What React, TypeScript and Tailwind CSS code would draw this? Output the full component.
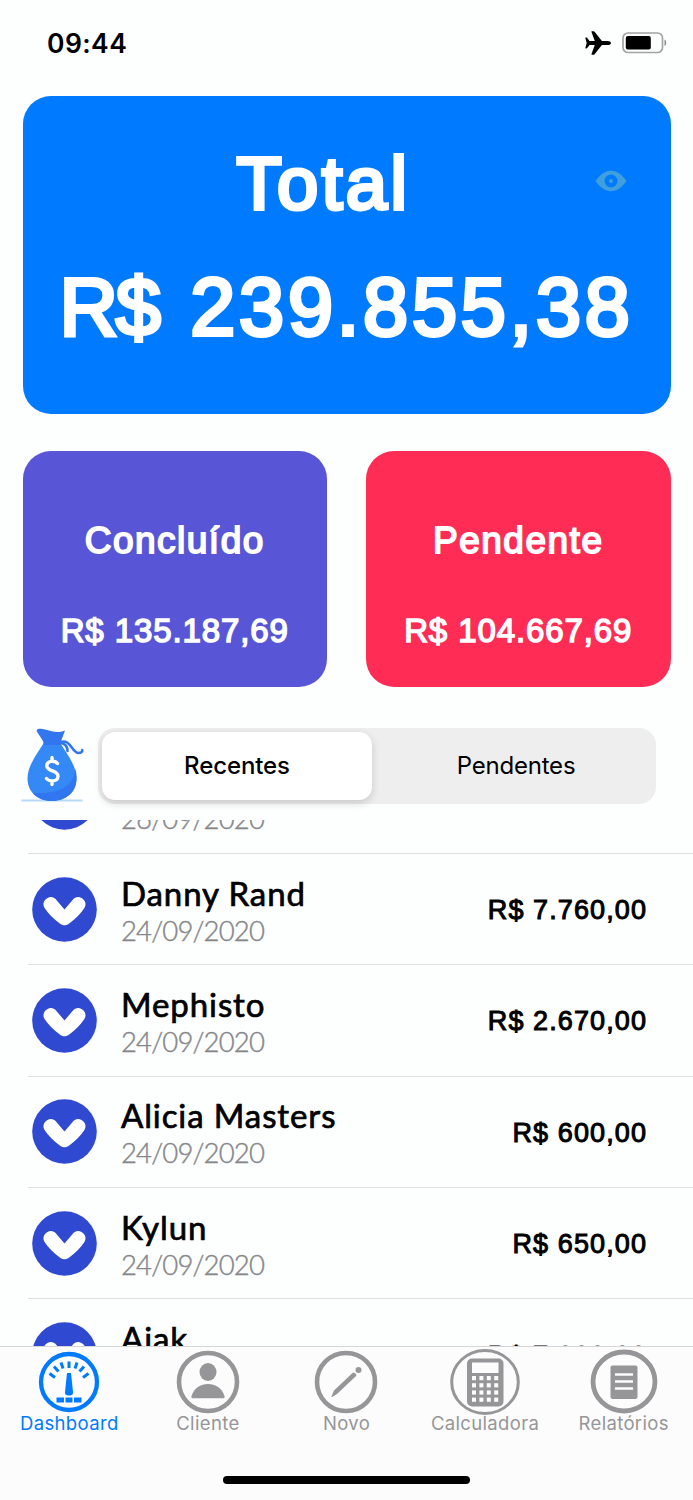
import { useState } from 'react'
import type { ReactNode } from 'react'

type Conta = { id: number; nome?: string; data: string; valor?: string }

const contas: Conta[] = [
  { id: 1, data: '26/09/2020' },
  { id: 2, nome: 'Danny Rand', data: '24/09/2020', valor: 'R$ 7.760,00' },
  { id: 3, nome: 'Mephisto', data: '24/09/2020', valor: 'R$ 2.670,00' },
  { id: 4, nome: 'Alicia Masters', data: '24/09/2020', valor: 'R$ 600,00' },
  { id: 5, nome: 'Kylun', data: '24/09/2020', valor: 'R$ 650,00' },
  { id: 6, nome: 'Ajak', data: '24/09/2020', valor: 'R$ 7.000,00' },
]

function StatusBar() {
  return (
    <div className="flex h-[96px] shrink-0 items-start justify-between pt-[28px] pr-[26px] pl-[47px]">
      <span className="text-[26.500px] leading-[31px] font-semibold tracking-[0.4px]">09:44</span>
      <div className="flex items-center gap-[11px] pt-[3px]">
        <svg width="26" height="24" viewBox="0 0 26 24">
          <path
            d="M26 12c0-1.300-1.500-2.100-3.300-2.100h-5.800L9.600.8C9.300.4 9 .2 8.600.2H6.900c-.4 0-.6.300-.4.800l3.300 8.900H4.600L2.200 6.900C2 6.600 1.800 6.500 1.400 6.500H.8c-.4 0-.5.300-.4.700L1.700 12 .4 16.800c-.1.400 0 .7.400.7h.6c.4 0 .6-.1.800-.4l2.400-3h5.200L6.500 23c-.2.500 0 .8.400.8h1.700c.4 0 .7-.2 1-.6l7.300-9.100h5.800c1.800 0 3.300-.8 3.300-2.100z"
          />
        </svg>
        <svg width="45" height="22" viewBox="0 0 45 22" fill="none">
          <rect x="1" y="1" width="39.500" height="19.500" rx="5" stroke="#a3a3a3" strokeWidth="1.700" />
          <rect x="3.800" y="4" width="25" height="13.500" rx="2" fill="#000" />
          <path d="M42.500 7.500c2.300 1.200 2.300 5.300 0 6.500z" fill="#8e8e8e" />
        </svg>
      </div>
    </div>
  )
}

function Olho() {
  return (
    <svg width="32" height="22" viewBox="0 0 32 22">
      <path d="M.5 11C5.500 4 10.500.8 16 .8S26.500 4 31.500 11C26.500 18 21.500 21.200 16 21.200S5.500 18 .5 11z" fill="#409fdc" />
      <circle cx="16" cy="11" r="6.500" fill="#007aff" />
      <circle cx="16" cy="11" r="2" fill="#409fdc" />
    </svg>
  )
}

function SacoDinheiro() {
  return (
    <svg width="64" height="76" viewBox="0 0 64 76" fill="none">
      <path d="M.5 72.500h61" stroke="#b9d9fb" strokeWidth="2" />
      <path d="M23 14.500C17 25 6.500 37 6.500 50.500c0 14 11 22.500 24.500 22.500s24.500-8.500 24.500-22.500C55.500 37 45 25 39 14.500z" fill="#3489f6" />
      <path d="M54.500 41c-1.500 14-12 24-35 24-2.500 0-4.500-.5-7.500.5C16.500 70.500 23.500 73 31 73c13.500 0 24.500-8.500 24.500-22.500 0-3.500-.2-7-1-9.500z" fill="#3176ee" />
      <path d="M22.500 17c1-3-2-6-6-12.500-2-3 0-4 3.500-3.700 7.500.7 14 5.700 24 1.700l-5 13.500 1.500 1z" fill="#3176ee" />
      <path d="M39 14.500c10-5 12 10.500 18.500 10.500 2.500 0 4-1 3.700-3M40 15c5 1 6.500 4 6.500 8" stroke="#3176ee" strokeWidth="2.600" strokeLinecap="round" />
      <path d="M36.500 35.500c-2.500-3.500-10.500-3-10.700 2.200-.2 6.500 11.700 4 11.200 10.800-.4 5.500-8.500 5.500-11.500 2M31 29.500V33M31 53v3.500" stroke="#fff" strokeWidth="3.400" strokeLinecap="round" />
    </svg>
  )
}

function Seta() {
  return (
    <svg width="65" height="65" viewBox="0 0 65 65" className="shrink-0">
      <circle cx="32.500" cy="32.500" r="32.300" fill="#2f49d1" />
      <path
        d="M15.500 21c3-1.700 6.500-1 8.700 1.700l8.300 9.800 8.300-9.800c2.200-2.700 5.700-3.400 8.700-1.700 4 2.300 5.100 6.300 2.900 10-3.400 5.700-8.900 10.500-14.900 15.200-3.500 2.800-6.500 2.800-10 0-6-4.700-11.500-9.500-14.900-15.200-2.200-3.700-1.100-7.700 2.900-10z"
        fill="#fff"
      />
    </svg>
  )
}

function Linha({ conta }: { conta: Conta }) {
  return (
    <div className="ml-[28px] flex h-[111.4px] shrink-0 items-center border-b-[1.4px] border-[#dfdfe0] pr-[46px] pl-[4px]">
      <Seta />
      <div className="ml-[24px] flex-1 pt-[4px] font-[Lato,sans-serif]">
        <p className="h-[38px] text-[33px] leading-[38px] tracking-[0.900px] text-black [-webkit-text-stroke:0.7px_#000]">{conta.nome}</p>
        <p className="text-[27.500px] leading-[37px] font-light tracking-[-0.85px] text-[#87878a] [-webkit-text-stroke:0.4px_#87878a]">{conta.data}</p>
      </div>
      <p className="pt-[2px] font-['Liberation_Sans',sans-serif] text-[27px] leading-[30px] tracking-[1.1px] text-black [-webkit-text-stroke:1px_#000]">
        {conta.valor}
      </p>
    </div>
  )
}

function Cartao({ titulo, valor, cor }: { titulo: string; valor: string; cor: string }) {
  return (
    <div className={`${cor} flex h-[236px] w-[304.500px] flex-col items-center rounded-[28px] pt-[68px] font-['Liberation_Sans',sans-serif] text-white`}>
      <p className="text-[37px] leading-[44px] tracking-[1.5px] [-webkit-text-stroke:1.8px_#fff]">{titulo}</p>
      <p className="mt-[48px] text-[33px] leading-[40px] tracking-[0.9px] [-webkit-text-stroke:1.5px_#fff]">{valor}</p>
    </div>
  )
}

function IconeDashboard() {
  return (
    <svg width="62" height="62" viewBox="0 0 62 62" fill="none" stroke="currentColor">
      <circle cx="31" cy="31" r="28" strokeWidth="4.300" />
      <path d="M11.500 22.500l5.500 4M16 15.500l4.500 5M23 11.500l2 6M31 10.500v6.500M39 11.500l-2 6M46 15.500l-4.500 5M50.500 22.500l-5.500 4" strokeWidth="3" />
      <path d="M29 22h4l2 19c.1 2.500-.8 3.500-4 3.500s-4.100-1-4-3.500z" fill="currentColor" stroke="none" />
      <path d="M18.500 49h7.500M27.500 49h7M36 49h7.500" strokeWidth="5" />
    </svg>
  )
}

function IconeCliente() {
  return (
    <svg width="64" height="64" viewBox="0 0 64 64" fill="currentColor">
      <circle cx="32" cy="32" r="29" fill="none" stroke="currentColor" strokeWidth="4.600" />
      <ellipse cx="32" cy="22" rx="8.500" ry="9" />
      <path d="M15.500 46c2.500-8 9-12 16.500-12s14 4 16.500 12c.4 1.500-.2 2.300-1.500 2.300H17c-1.300 0-1.900-.8-1.500-2.300z" />
    </svg>
  )
}

function IconeNovo() {
  return (
    <svg width="64" height="64" viewBox="0 0 64 64" fill="currentColor">
      <circle cx="32" cy="32" r="29" fill="none" stroke="currentColor" strokeWidth="4.600" />
      <path d="M17.500 46.500l2.500-6 18.500-17.500c1-.8 1.700-.8 2.500 0l.8.900c.8.900.7 1.600 0 2.400L23 44l-5 3c-.5.200-.7 0-.5-.5z" />
      <circle cx="44.500" cy="20" r="3" />
    </svg>
  )
}

function IconeCalculadora() {
  const pos = [0, 1, 2, 3]
  return (
    <svg width="70" height="66" viewBox="0 0 70 66" fill="currentColor">
      <ellipse cx="35" cy="33" rx="33.300" ry="31.500" fill="none" stroke="currentColor" strokeWidth="3" />
      <rect x="17" y="9.500" width="36.500" height="48" rx="5" />
      <rect x="22" y="13.500" width="26.500" height="10.500" fill="#fcfcfd" />
      {pos.map((l) => pos.map((c) => (
        <rect key={`${l}-${c}`} x={22 + c * 7.4} y={27 + l * 7.2} width="4" height="4.200" fill="#fcfcfd" />
      )))}
    </svg>
  )
}

function IconeRelatorios() {
  return (
    <svg width="68" height="66" viewBox="0 0 68 66" fill="currentColor">
      <ellipse cx="34" cy="32.500" rx="31" ry="29.500" fill="none" stroke="currentColor" strokeWidth="4.800" />
      <rect x="20.500" y="16.500" width="27" height="33.500" rx="2" />
      <path d="M25 25.500h18M25 32.500h18M25 39.500h18" stroke="#fcfcfd" strokeWidth="2.600" />
    </svg>
  )
}

const abas: { label: string; icone: ReactNode }[] = [
  { label: 'Dashboard', icone: <IconeDashboard /> },
  { label: 'Cliente', icone: <IconeCliente /> },
  { label: 'Novo', icone: <IconeNovo /> },
  { label: 'Calculadora', icone: <IconeCalculadora /> },
  { label: 'Relatórios', icone: <IconeRelatorios /> },
]

export default function App() {
  const [filtro, setFiltro] = useState('Recentes')
  const [aba, setAba] = useState('Dashboard')

  return (
    <div className="flex h-[1500px] w-[693px] flex-col overflow-hidden bg-[#fdfefe] font-[Inter,sans-serif] text-black">
      <StatusBar />

      {/* Total */}
      <section className="relative mx-[22.500px] flex h-[317.500px] shrink-0 flex-col items-center rounded-[28px] bg-[#007aff] pt-[45px] font-['Liberation_Sans',sans-serif] text-white">
        <p className="-ml-[46px] text-[74px] leading-[86px] tracking-[3.5px] [-webkit-text-stroke:4px_#fff]">Total</p>
        <div className="absolute top-[74px] right-[44px]"><Olho /></div>
        <p className="mt-[34px] text-[81px] leading-[92px] tracking-[3.800px] whitespace-nowrap [-webkit-text-stroke:4px_#fff]">
          <span className="mr-[5px] tracking-[-2px]">R$</span> 239.855,38
        </p>
      </section>

      <section className="mt-[37px] flex shrink-0 justify-between px-[22.500px]">
        <Cartao titulo="Concluído" valor="R$ 135.187,69" cor="bg-[#5856d6]" />
        <Cartao titulo="Pendente" valor="R$ 104.667,69" cor="bg-[#ff2d55]" />
      </section>

      {/* Filtro */}
      <section className="mt-[41px] flex h-[76px] shrink-0 pl-[21px]">
        <SacoDinheiro />
        <div className="ml-[13px] flex w-[558px] rounded-[17px] bg-[#eeeeee] p-[4px]">
          {['Recentes', 'Pendentes'].map((f) => (
            <button
              key={f}
              onClick={() => setFiltro(f)}
              className={`h-[68px] rounded-[13px] text-[24px] ${
                filtro === f ? 'w-[270px] bg-white font-medium tracking-[-0.1px] shadow-[0_3px_8px_rgba(0,0,0,0.16)]' : 'flex-1 pl-[8px] tracking-[-0.2px]'
              }`}
            >
              {f}
            </button>
          ))}
        </div>
      </section>

      {/* Lista */}
      <main className="mt-[16px] flex min-h-0 flex-1 flex-col overflow-hidden">
        <div className="-mt-[77px] flex flex-col">
          {contas.map((c) => <Linha key={c.id} conta={c} />)}
        </div>
      </main>

      <nav className="flex h-[154.500px] shrink-0 flex-col items-center border-t-[1.500px] border-[#d5d6d7] bg-[#fcfcfd]">
        <div className="grid w-full grid-cols-5">
          {abas.map((a) => (
            <button
              key={a.label}
              onClick={() => setAba(a.label)}
              className={`flex flex-col items-center ${aba === a.label ? 'text-[#007aff]' : 'text-[#969698]'}`}
            >
              <span className="flex h-[68px] items-center pt-[2px]">{a.icone}</span>
              <span className="-mt-[2px] text-[18.500px] leading-[20px] tracking-[0.35px]">{a.label}</span>
            </button>
          ))}
        </div>
        <div className="mt-[43px] h-[8px] w-[247px] rounded-full bg-black" />
      </nav>
    </div>
  )
}
